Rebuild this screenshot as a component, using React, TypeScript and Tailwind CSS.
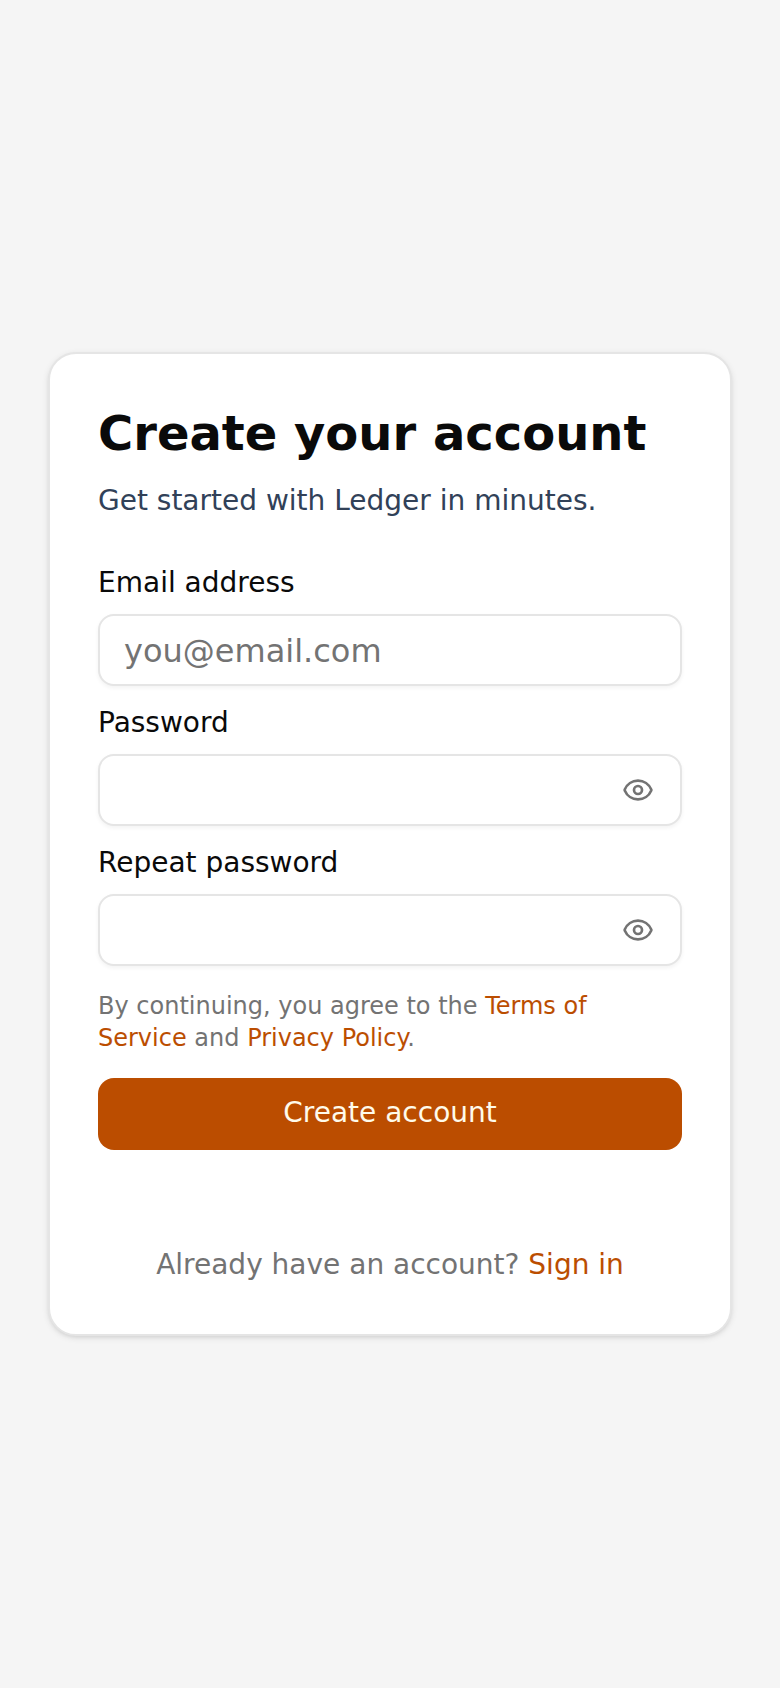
import { useState } from 'react';
import type { FormEvent, ReactNode } from 'react';
import { Eye, EyeOff } from 'lucide-react';

const inputClass =
  'h-18 w-full rounded-2xl border-2 border-neutral-200 bg-white px-6 pt-0.5 text-[32px] text-neutral-950 shadow-[0_2px_4px_rgba(0,0,0,0.05)] outline-none placeholder:text-neutral-500 focus-visible:border-amber-700';

function Field({ id, label, children }: { id: string; label: string; children: ReactNode }) {
  return (
    <div className="flex flex-col gap-[18px]">
      <label htmlFor={id} className="text-[28px] leading-[26px] text-neutral-950">
        {label}
      </label>
      {children}
    </div>
  );
}

function PasswordField({ id, label }: { id: string; label: string }) {
  const [visible, setVisible] = useState(false);

  return (
    <Field id={id} label={label}>
      <div className="relative">
        <input
          id={id}
          type={visible ? 'text' : 'password'}
          autoComplete="new-password"
          className={`${inputClass} pr-20`}
        />
        <button
          type="button"
          aria-label={visible ? 'Hide password' : 'Show password'}
          onClick={() => setVisible(!visible)}
          className="absolute inset-y-0 right-0 flex items-center px-7 text-neutral-500"
        >
          {visible ? <EyeOff size={32} /> : <Eye size={32} />}
        </button>
      </div>
    </Field>
  );
}

function TextLink({ href, children }: { href: string; children: ReactNode }) {
  return (
    <a href={href} className="text-amber-700 hover:underline">
      {children}
    </a>
  );
}

export default function App() {
  const handleSubmit = (e: FormEvent) => e.preventDefault();

  return (
    <main className="flex min-h-screen items-center justify-center bg-neutral-100 p-12 font-['DejaVu_Sans',sans-serif]">
      <div className="w-full max-w-3xl rounded-[28px] border-2 border-neutral-200 bg-white px-12 pt-12 pb-[50px] shadow-[0_2px_6px_rgba(0,0,0,0.1),0_2px_4px_-2px_rgba(0,0,0,0.1)]">
        <header className="mb-[50px] flex flex-col gap-[18px]">
          <h1 className="text-5xl leading-[62px] font-bold text-neutral-950">Create your account</h1>
          <p className="text-[28px] leading-[38px] text-slate-700">Get started with Ledger in minutes.</p>
        </header>

        <form onSubmit={handleSubmit} className="flex flex-col gap-6">
          <Field id="email" label="Email address">
            <input id="email" type="email" placeholder="you@email.com" className={inputClass} />
          </Field>
          <PasswordField id="password" label="Password" />
          <PasswordField id="repeat-password" label="Repeat password" />

          <p className="text-2xl leading-8 text-neutral-500">
            By continuing, you agree to the <TextLink href="#terms">Terms of Service</TextLink> and{' '}
            <TextLink href="#privacy">Privacy Policy</TextLink>.
          </p>

          <button
            type="submit"
            className="h-18 rounded-2xl bg-amber-700 pb-0.5 text-[28px] leading-10 text-amber-50 hover:bg-amber-800"
          >
            Create account
          </button>
        </form>

        <p className="mt-24 text-center text-[28px] leading-[38px] text-neutral-500">
          Already have an account? <TextLink href="#sign-in">Sign in</TextLink>
        </p>
      </div>
    </main>
  );
}
